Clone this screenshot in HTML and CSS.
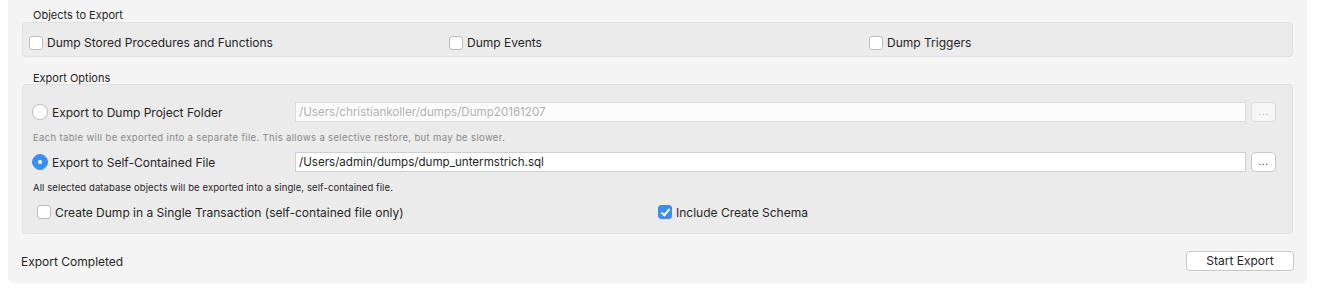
FILE: index.html
```html
<!DOCTYPE html>
<html lang="en">
<head>
    <meta charset="UTF-8">
    <title>Export</title>
    <link rel="stylesheet" href="styles.css">
</head>
<body>
    <div class="panel">
        <div class="section-title">Objects to Export</div>
        <div class="group objects">
            <label class="option"><span class="check"></span>Dump Stored Procedures and Functions</label>
            <label class="option"><span class="check"></span>Dump Events</label>
            <label class="option"><span class="check"></span>Dump Triggers</label>
        </div>

        <div class="section-title second">Export Options</div>
        <div class="group options">
            <div class="file-row">
                <label class="option radio-label"><span class="radio"></span>Export to Dump Project Folder</label>
                <div class="field disabled">/Users/christiankoller/dumps/Dump20161207</div>
                <div class="dots disabled">...</div>
            </div>
            <div class="hint muted">Each table will be exported into a separate file. This allows a selective restore, but may be slower.</div>
            <div class="file-row">
                <label class="option radio-label"><span class="radio on"></span>Export to Self-Contained File</label>
                <div class="field">/Users/admin/dumps/dump_untermstrich.sql</div>
                <div class="dots">...</div>
            </div>
            <div class="hint">All selected database objects will be exported into a single, self-contained file.</div>
            <div class="extra">
                <label class="option"><span class="check"></span>Create Dump in a Single Transaction (self-contained file only)</label>
                <label class="option"><span class="check on"></span>Include Create Schema</label>
            </div>
        </div>

        <div class="footer">
            <span class="status">Export Completed</span>
            <button class="start">Start Export</button>
        </div>
    </div>
</body>
</html>
```

FILE: styles.css
```css
body {
    margin: 0;
    background: #ffffff;
    font-family: Inter, "Liberation Sans", Arial, sans-serif;
    color: #262626;
}
.panel {
    margin-left: 8px;
    width: 1299px;
    height: 283px;
    background: #f4f4f4;
    border-radius: 0 0 5px 5px;
    box-sizing: border-box;
    padding: 0 14px 0 14px;
}
.section-title {
    font-size: 11px;
    height: 22px;
    line-height: 30px;
    padding-left: 11px;
}
.section-title.second {
    height: 27px;
    line-height: 42px;
}
.group {
    background: #ebebeb;
    border: 1px solid #e0e0e0;
    border-radius: 4px;
    box-sizing: border-box;
    width: 1271px;
}
.objects {
    height: 35px;
    display: grid;
    grid-template-columns: 420px 420px 420px;
    align-items: center;
    padding: 6px 0 0 6px;
}
.option {
    display: flex;
    align-items: center;
    font-size: 12px;
    white-space: nowrap;
}
.check {
    width: 12px;
    height: 12px;
    border: 1px solid #bdbdbd;
    border-radius: 3px;
    background: #ffffff;
    margin-right: 4px;
    position: relative;
    flex: none;
}
.check.on {
    background: #3a8ef6;
    border-color: #3a8ef6;
}
.check.on::after {
    content: "";
    position: absolute;
    left: 4px;
    top: 1px;
    width: 3px;
    height: 7px;
    border: solid #ffffff;
    border-width: 0 2px 2px 0;
    transform: rotate(40deg);
}
.radio {
    width: 14px;
    height: 14px;
    border: 1px solid #bdbdbd;
    border-radius: 50%;
    background: #ffffff;
    margin-right: 4px;
    position: relative;
    flex: none;
}
.radio.on {
    background: #3a8ef6;
    border-color: #3a8ef6;
}
.radio.on::after {
    content: "";
    position: absolute;
    left: 5px;
    top: 5px;
    width: 4px;
    height: 4px;
    border-radius: 50%;
    background: #ffffff;
}
.options {
    height: 150px;
    padding: 17px 0 0 9px;
}
.file-row {
    display: flex;
    align-items: center;
    height: 20px;
}
.radio-label {
    width: 263px;
}
.field {
    width: 951px;
    height: 20px;
    box-sizing: border-box;
    border: 1px solid #cfcfcf;
    background: #ffffff;
    font-size: 11.6px;
    line-height: 18px;
    padding-left: 3px;
    white-space: nowrap;
}
.field.disabled {
    color: #b3b3b3;
    background: #fbfbfb;
    border-color: #dcdcdc;
}
.dots {
    width: 25px;
    height: 20px;
    margin-left: 5px;
    box-sizing: border-box;
    border: 1px solid #c8c8c8;
    border-radius: 4px;
    background: #ffffff;
    font-size: 10px;
    line-height: 16px;
    text-align: center;
    letter-spacing: 0.5px;
}
.dots.disabled {
    color: #b8b8b8;
    background: #f6f6f6;
    border-color: #dcdcdc;
}
.hint {
    font-size: 9.5px;
    height: 30px;
    line-height: 31px;
    padding-left: 1px;
    letter-spacing: 0.1px;
}
.hint.muted {
    color: #8a8a8a;
    letter-spacing: 0.35px;
}
.extra {
    display: grid;
    grid-template-columns: 621px 400px;
    padding-left: 5px;
    height: 20px;
    align-items: center;
}
.footer {
    display: flex;
    justify-content: space-between;
    align-items: center;
    height: 52px;
    padding-left: 0;
}
.status {
    font-size: 12px;
    margin-left: -1px;
    padding-top: 2px;
}
.start {
    width: 108px;
    height: 20px;
    margin-right: -1px;
    margin-top: 1px;
    background: #ffffff;
    border: 1px solid #c8c8c8;
    border-radius: 4px;
    font-family: Inter, "Liberation Sans", Arial, sans-serif;
    font-size: 12px;
    color: #262626;
    padding: 0;
}
```
